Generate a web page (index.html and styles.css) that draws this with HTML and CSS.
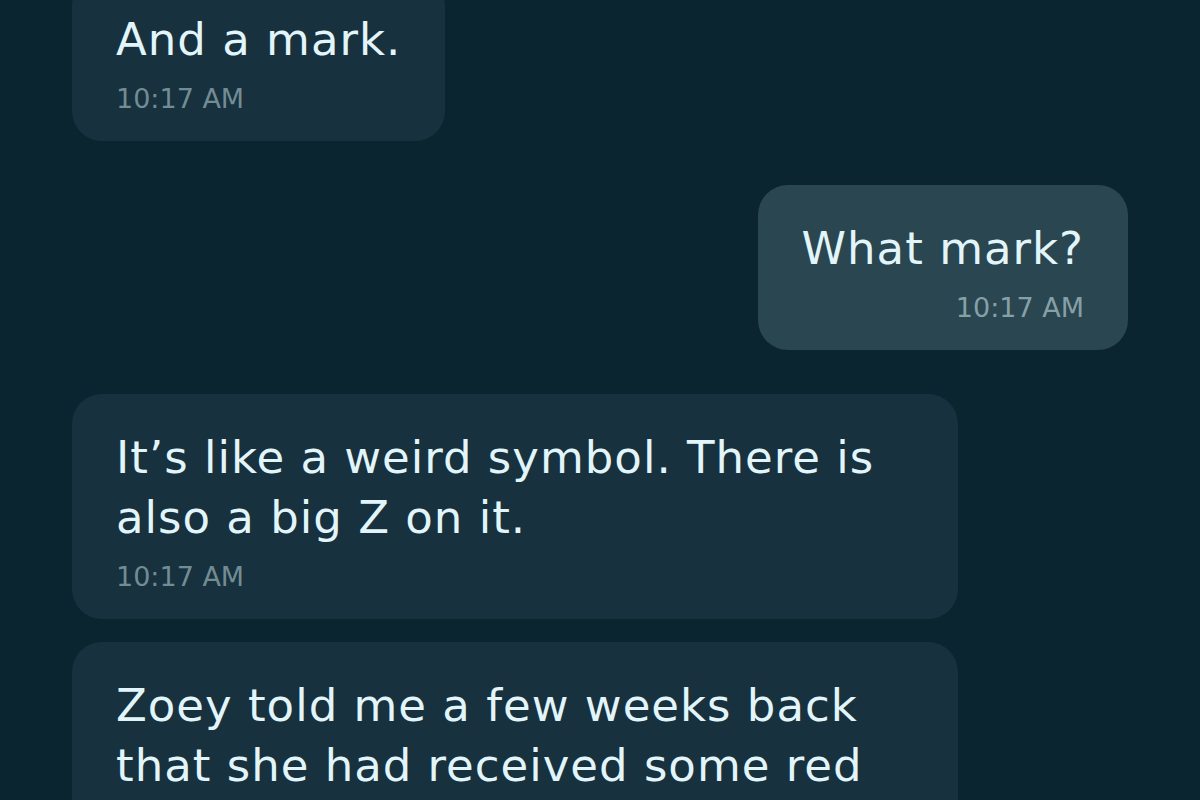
FILE: index.html
```html
<!DOCTYPE html>
<html lang="en">

<head>
    <meta charset="UTF-8">
    <title>Chat</title>
    <link rel="stylesheet" href="styles.css">
</head>

<body>
    <div class="chat">
        <div class="msg in">
            <p class="text">And a mark.</p>
            <span class="time">10:17 AM</span>
        </div>
        <div class="msg out">
            <p class="text">What mark?</p>
            <span class="time">10:17 AM</span>
        </div>
        <div class="msg in">
            <p class="text">It’s like a weird symbol. There is also a big Z on it.</p>
            <span class="time">10:17 AM</span>
        </div>
        <div class="msg in same">
            <p class="text">Zoey told me a few weeks back that she had received some red envelopes too.</p>
            <span class="time">10:17 AM</span>
        </div>
    </div>
</body>

</html>
```

FILE: styles.css
```css
body {
    margin: 0;
    height: 800px;
    overflow: hidden;
    background-color: #0b2530;
    font-family: 'DejaVu Sans', 'Noto Sans', sans-serif;
}

.chat {
    display: flex;
    flex-direction: column;
    padding: 0 72px;
    margin-top: -24px;
}

.msg {
    display: flex;
    flex-direction: column;
    max-width: 798px;
    padding: 34px 44px 24px 44px;
    border-radius: 30px;
    margin-top: 44px;
}

.msg:first-child {
    margin-top: 0;
}

.msg.same {
    margin-top: 23px;
}

.in {
    align-self: flex-start;
    background-color: #17313e;
}

.out {
    align-self: flex-end;
    align-items: flex-end;
    background-color: #2a4650;
}

.text {
    margin: 0;
    font-size: 45px;
    line-height: 60px;
    color: #e2f5fa;
    letter-spacing: 1px;
}

.time {
    margin-top: 11px;
    font-size: 27px;
    line-height: 36px;
    color: #728c94;
}

.out .time {
    color: #85a0a7;
}
```
